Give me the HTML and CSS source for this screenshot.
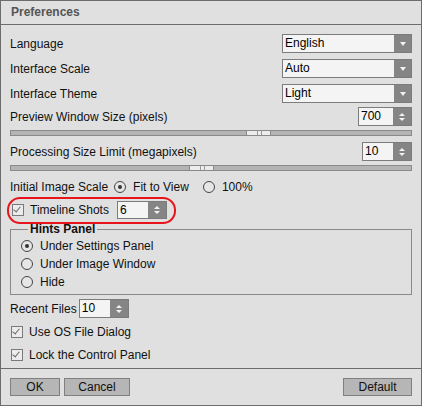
FILE: index.html
```html
<!DOCTYPE html>
<html>
<head>
<meta charset="utf-8">
<link rel="stylesheet" href="styles.css">
</head>
<body>
<div class="dialog">
  <div class="titlebar">Preferences</div>
  <div class="content">
    <div class="row r-combo first">
      <span>Language</span>
      <div class="combo"><span class="val">English</span><span class="btn"><i class="down"></i></span></div>
    </div>
    <div class="row r-combo gap6">
      <span>Interface Scale</span>
      <div class="combo"><span class="val">Auto</span><span class="btn"><i class="down"></i></span></div>
    </div>
    <div class="row r-combo gap6">
      <span>Interface Theme</span>
      <div class="combo"><span class="val">Light</span><span class="btn"><i class="down"></i></span></div>
    </div>
    <div class="row r-spin gap4">
      <span>Preview Window Size (pixels)</span>
      <div class="spin w54"><span class="val">700</span><span class="btn"><i class="up"></i><i class="down"></i></span></div>
    </div>
    <div class="slider gap4"><div class="handle" style="left:235px"><b></b></div></div>
    <div class="row r-spin gap6">
      <span>Processing Size Limit (megapixels)</span>
      <div class="spin w50"><span class="val">10</span><span class="btn"><i class="up"></i><i class="down"></i></span></div>
    </div>
    <div class="slider gap4"><div class="handle" style="left:178px"><b></b></div></div>
    <div class="row r-line gap7 start">
      <span>Initial Image Scale</span>
      <span class="radio on scale1"></span><span class="rlabel">Fit to View</span>
      <span class="radio scale2"></span><span class="rlabel">100%</span>
    </div>
    <div class="row r-tl gap5 start highlight">
      <span class="check tl"></span><span class="clabel">Timeline Shots</span>
      <div class="spin w50 tlspin"><span class="val">6</span><span class="btn"><i class="up"></i><i class="down"></i></span></div>
    </div>
    <fieldset class="group">
      <legend>Hints Panel</legend>
      <div class="gline"><span class="radio on"></span><span class="rlabel">Under Settings Panel</span></div>
      <div class="gline"><span class="radio"></span><span class="rlabel">Under Image Window</span></div>
      <div class="gline"><span class="radio"></span><span class="rlabel">Hide</span></div>
    </fieldset>
    <div class="row r-spin gap4 start">
      <span>Recent Files</span>
      <div class="spin w50 rfspin"><span class="val">10</span><span class="btn"><i class="up"></i><i class="down"></i></span></div>
    </div>
    <div class="row r-line gap5 start">
      <span class="check"></span><span class="clabel">Use OS File Dialog</span>
    </div>
    <div class="row r-line gap5 start">
      <span class="check"></span><span class="clabel">Lock the Control Panel</span>
    </div>
  </div>
  <div class="footer">
    <button class="b-ok">OK</button>
    <button class="b-cancel">Cancel</button>
    <span class="spacer"></span>
    <button class="b-default">Default</button>
  </div>
</div>
</body>
</html>
```
FILE: styles.css
```css
html, body {
  margin: 0;
  padding: 0;
  background: #e0e0e0;
}
body {
  font-family: "Liberation Sans", Arial, sans-serif;
  font-size: 12px;
  color: #111;
}
.dialog {
  width: 422px;
  height: 406px;
  box-sizing: border-box;
  border: 1px solid #6c6c6c;
  background: #e0e0e0;
  display: flex;
  flex-direction: column;
  overflow: hidden;
}
.titlebar {
  height: 23px;
  line-height: 23px;
  border-bottom: 1px solid #6c6c6c;
  padding-left: 10px;
  font-weight: bold;
  color: #555;
  flex: none;
}
.content {
  flex: 1;
  min-height: 0;
  padding: 0 9px 0 9px;
  display: flex;
  flex-direction: column;
}
.row {
  display: flex;
  align-items: center;
  justify-content: space-between;
  flex: none;
}
.row.start { justify-content: flex-start; }
.first { margin-top: 9px; }
.gap4 { margin-top: 4px; }
.gap5 { margin-top: 5px; }
.gap6 { margin-top: 6px; }
.gap7 { margin-top: 7px; }
.r-combo { height: 19px; }
.r-spin { height: 19px; }
.r-line { height: 18px; }
.r-tl { height: 18px; }

.combo, .spin {
  box-sizing: border-box;
  height: 100%;
  border: 1px solid #7c7c7c;
  background: #f4f4f4;
  display: flex;
  align-items: stretch;
}
.combo { width: 130px; }
.w54 { width: 54px; }
.w50 { width: 50px; }
.val {
  flex: 1;
  padding-left: 2px;
  line-height: 17px;
  color: #000;
}
.btn {
  width: 17px;
  background: #858585;
  display: flex;
  flex-direction: column;
  align-items: center;
  justify-content: center;
  gap: 2px;
}
.spin .btn { width: 18px; }
i.down, i.up {
  display: block;
  width: 0;
  height: 0;
  border-left: 3.5px solid transparent;
  border-right: 3.5px solid transparent;
}
i.down { border-top: 4px solid #f2f2f2; }
.spin i.down, .spin i.up {
  border-left-width: 3px;
  border-right-width: 3px;
}
.spin i.down { border-top: 3px solid #f2f2f2; }
.spin i.up { border-bottom: 3px solid #f2f2f2; }

.slider {
  position: relative;
  height: 6px;
  flex: none;
  box-sizing: border-box;
  border: 1px solid #8a8a8a;
  background: #b4b4b4;
}
.handle {
  position: absolute;
  top: -1px;
  width: 25px;
  height: 6px;
  box-sizing: border-box;
  border: 1px solid #8a8a8a;
  background: #ececec;
}
.handle b {
  position: absolute;
  left: 10px;
  top: 0;
  width: 3px;
  height: 4px;
  border-left: 1px solid #9a9a9a;
  border-right: 1px solid #9a9a9a;
}

.radio {
  box-sizing: border-box;
  width: 12px;
  height: 12px;
  border: 1px solid #444;
  border-radius: 50%;
  background: #e6e6e6;
  position: relative;
  flex: none;
}
.radio.on::after {
  content: "";
  position: absolute;
  left: 3px;
  top: 3px;
  width: 4px;
  height: 4px;
  border-radius: 50%;
  background: #333;
}
.scale1 { margin-left: 6px; }
.scale2 { margin-left: 14px; }
.rlabel { margin-left: 7px; }

.check {
  box-sizing: border-box;
  width: 12px;
  height: 12px;
  border: 1px solid #7a7a7a;
  background: #ececec;
  position: relative;
  flex: none;
  margin-left: 1px;
}
.check::after {
  content: "";
  position: absolute;
  left: 2px;
  top: 0px;
  width: 3px;
  height: 6px;
  border-right: 1px solid #6a6a6a;
  border-bottom: 1px solid #6a6a6a;
  transform: rotate(40deg);
  transform-origin: 50% 50%;
}
.check.tl { margin-left: 2px; }
.clabel { margin-left: 6px; }
.tlspin { margin-left: 8px; height: 18px; }
.rfspin { margin-left: 2px; }

.highlight { position: relative; }
.highlight::after {
  content: "";
  position: absolute;
  left: -3px;
  top: -4px;
  width: 169px;
  height: 27px;
  box-sizing: border-box;
  border: 2px solid #e8141b;
  border-radius: 13px;
  pointer-events: none;
}

.group {
  margin: 3px 0 0 0;
  padding: 1px 10px 3px 10px;
  border: 1px solid #8a8a8a;
  min-width: 0;
  flex: none;
}
.group legend {
  font-weight: bold;
  color: #111;
  padding: 0 2px;
  margin-left: 7px;
  line-height: 14px;
}
.gline {
  height: 18px;
  display: flex;
  align-items: center;
}

.footer {
  flex: none;
  height: 27px;
  border-top: 1px solid #6c6c6c;
  display: flex;
  align-items: flex-start;
  padding: 9px 9px 0 9px;
  box-sizing: content-box;
}
.footer button {
  font-family: "Liberation Sans", Arial, sans-serif;
  font-size: 12px;
  color: #111;
  height: 18px;
  padding: 0;
  margin: 0;
  border: 1px solid #808080;
  background: #b6b6b6;
  border-radius: 0;
  line-height: 16px;
}
.b-ok { width: 50px; }
.b-cancel { width: 66px; margin-left: 4px !important; }
.b-default { width: 69px; }
.spacer { flex: 1; }
```
